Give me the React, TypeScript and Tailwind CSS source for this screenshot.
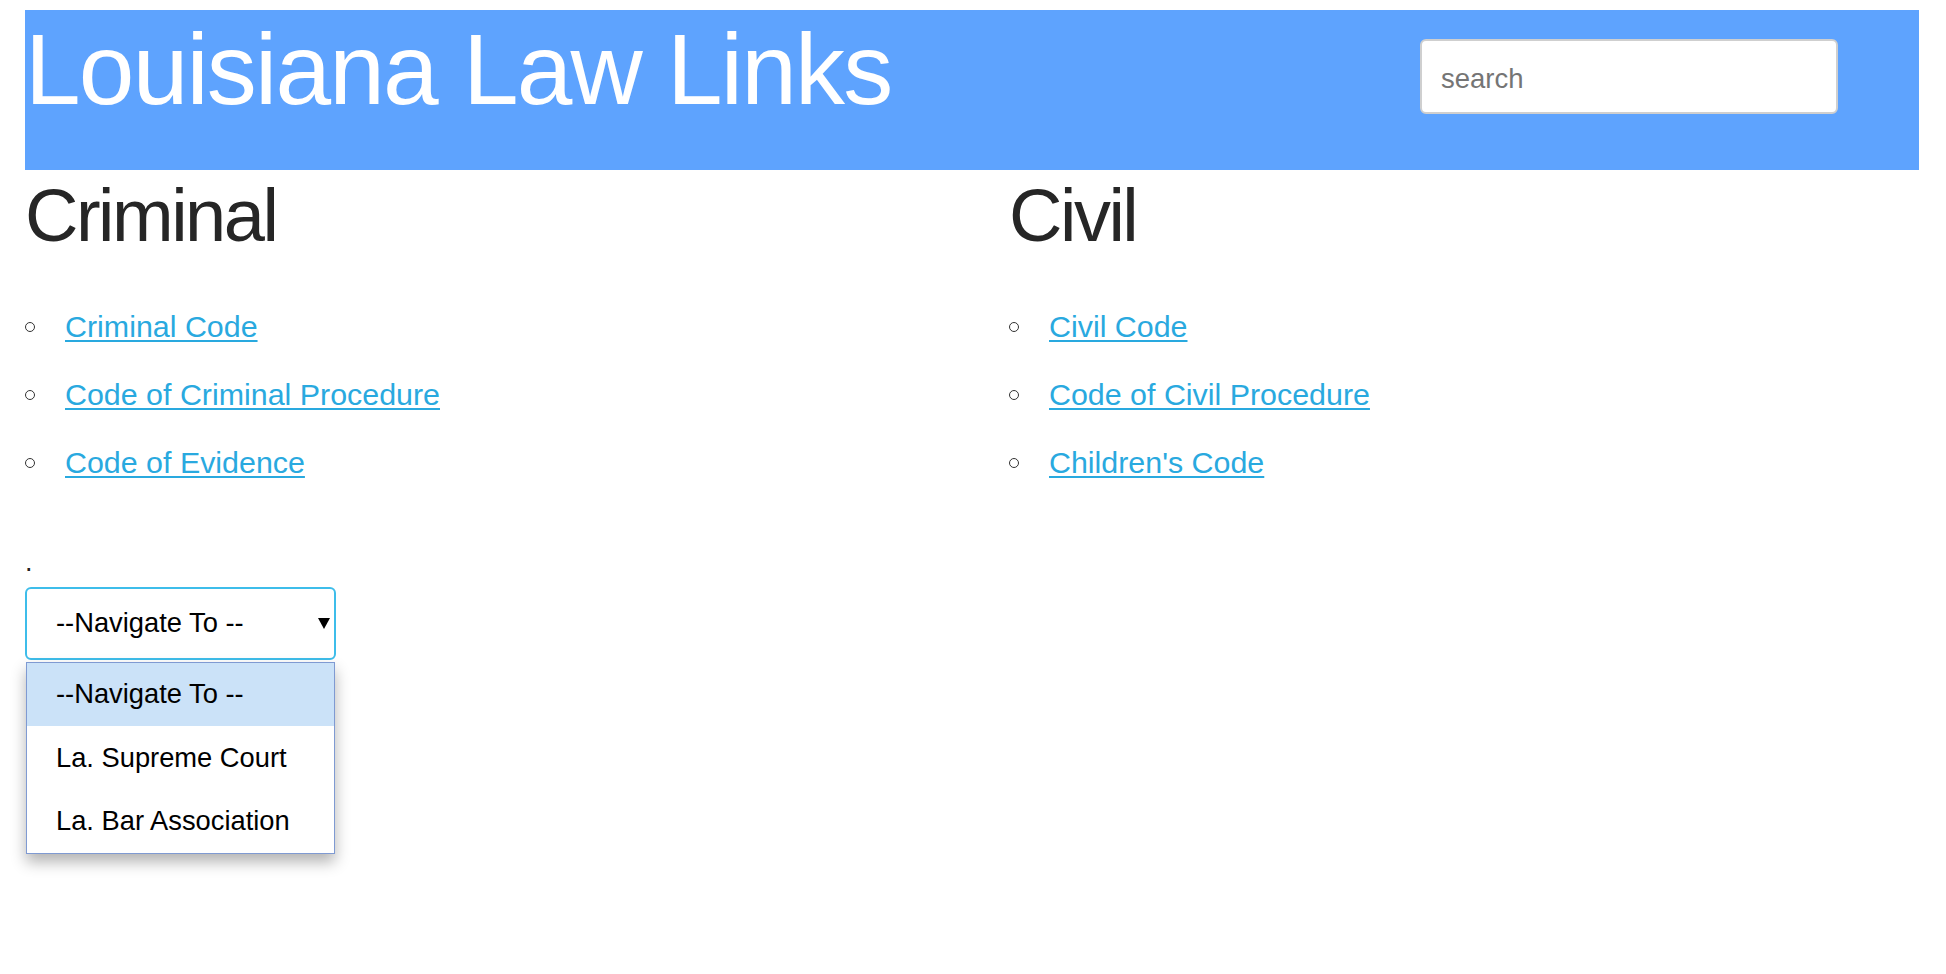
import React from "react";

function Bullet() {
  return <span className="inline-block w-[10px] h-[10px] rounded-full border border-[#333] translate-y-[1px] shrink-0" />;
}

function LinkList({ items }: { items: string[] }) {
  return (
    <ul className="mt-[36px]">
      {items.map((t) => (
        <li key={t} className="flex items-center h-[68px]">
          <Bullet />
          <a href="#" className="ml-[30px] text-[30.4px] leading-[68px] text-[#29a9df] underline decoration-[2px] underline-offset-[3px]">
            {t}
          </a>
        </li>
      ))}
    </ul>
  );
}

export default function App() {
  return (
    <div className="min-h-[974px] bg-white px-[25px] pt-[10px] font-['Liberation_Sans',Arial,sans-serif] text-[#222]">
      <header className="w-[1894px] h-[160px] bg-[#5ea3fe] flex justify-between items-start">
        <h1 className="text-[100px] leading-[110px] tracking-[-1.8px] mt-[4px] text-white font-normal">Louisiana Law Links</h1>
        <input
          type="text"
          placeholder="search"
          className="mt-[29px] mr-[81px] w-[418px] h-[75px] bg-white border-2 border-[#cfcfcf] rounded-[6px] px-[19px] pt-[5px] text-[27.5px] placeholder:text-[#757575] outline-none"
        />
      </header>

      <div className="flex">
        <section className="w-[984px] shrink-0">
          <h2 className="mt-[6px] text-[74px] leading-[80px] tracking-[-2.5px] text-[#262626] font-normal">Criminal</h2>
          <LinkList items={["Criminal Code", "Code of Criminal Procedure", "Code of Evidence"]} />
        </section>
        <section className="flex-1">
          <h2 className="mt-[6px] text-[74px] leading-[80px] tracking-[-2.5px] text-[#262626] font-normal">Civil</h2>
          <LinkList items={["Civil Code", "Code of Civil Procedure", "Children's Code"]} />
        </section>
      </div>

      <p className="mt-[51px] text-[27px] leading-[31px] text-[#222]">.</p>

      <div className="relative mt-[9px] w-[311px]">
        <div className="h-[73px] border-2 border-[#3ebdea] rounded-[6px] flex items-center pl-[29px] pr-[4px] justify-between bg-white">
          <span className="text-[27.3px] text-black">--Navigate To --</span>
          <svg width="12" height="11" viewBox="0 0 12 11">
            <path d="M0 0 H12 L6 11 Z" fill="#000" />
          </svg>
        </div>
        <div className="absolute left-[1px] top-[75px] w-[309px] bg-white border border-[#7f9ad2] shadow-[0_8px_14px_rgba(0,0,0,0.3)]">
          <div className="h-[63px] bg-[#cbe2f8] flex items-center pl-[29px] text-[27.3px] text-black">--Navigate To --</div>
          <div className="h-[64px] flex items-center pl-[29px] text-[27.3px] text-black">La. Supreme Court</div>
          <div className="h-[63px] flex items-center pl-[29px] text-[27.3px] text-black">La. Bar Association</div>
        </div>
      </div>
    </div>
  );
}
